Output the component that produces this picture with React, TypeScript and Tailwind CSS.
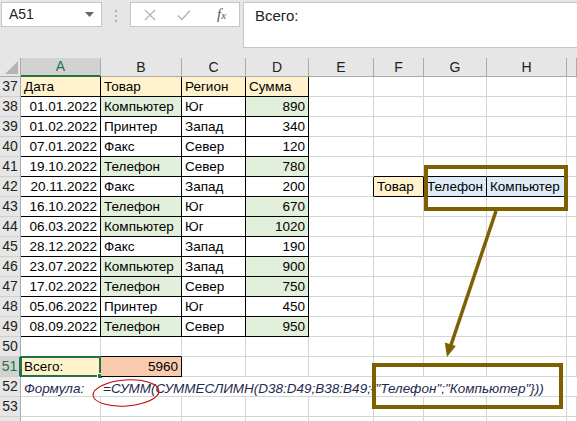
import { ReactNode } from 'react';

type Cell = { text?: string; right?: boolean; bg?: string };

const GREEN = 'bg-[#e2efda]';
const CREAM = 'bg-[#fff2cc]';

const data: [string, string, string, string, boolean][] = [
  ['01.01.2022', 'Компьютер', 'Юг', '890', true],
  ['01.02.2022', 'Принтер', 'Запад', '340', false],
  ['07.01.2022', 'Факс', 'Север', '120', false],
  ['19.10.2022', 'Телефон', 'Север', '780', true],
  ['20.11.2022', 'Факс', 'Запад', '200', false],
  ['16.10.2022', 'Телефон', 'Юг', '670', true],
  ['06.03.2022', 'Компьютер', 'Юг', '1020', true],
  ['28.12.2022', 'Факс', 'Запад', '190', false],
  ['23.07.2022', 'Компьютер', 'Запад', '900', true],
  ['17.02.2022', 'Телефон', 'Север', '750', true],
  ['05.06.2022', 'Принтер', 'Юг', '450', false],
  ['08.09.2022', 'Телефон', 'Север', '950', true],
];

function buildRows(): Record<number, Cell[]> {
  const rows: Record<number, Cell[]> = {};
  for (let r = 37; r <= 54; r++) rows[r] = Array.from({ length: 9 }, () => ({}));
  rows[37][0] = { text: 'Дата', bg: CREAM };
  rows[37][1] = { text: 'Товар', bg: CREAM };
  rows[37][2] = { text: 'Регион', bg: CREAM };
  rows[37][3] = { text: 'Сумма', bg: CREAM };
  data.forEach(([d, item, region, sum, hit], i) => {
    const r = 38 + i;
    rows[r][0] = { text: d, right: true };
    rows[r][1] = { text: item, bg: hit ? GREEN : undefined };
    rows[r][2] = { text: region };
    rows[r][3] = { text: sum, right: true, bg: hit ? GREEN : undefined };
  });
  rows[42][5] = { text: 'Товар', bg: CREAM };
  rows[42][6] = { text: 'Телефон', bg: 'bg-[#ddebf7]' };
  rows[42][7] = { text: 'Компьютер', bg: 'bg-[#ddebf7]' };
  rows[51][0] = { text: 'Всего:', bg: CREAM };
  rows[51][1] = { text: '5960', right: true, bg: 'bg-[#f8cbad]' };
  return rows;
}

function boxed(r: number, c: number) {
  if (c >= 0 && c <= 3 && r >= 37 && r <= 49) return true;
  if (r === 51 && (c === 0 || c === 1)) return true;
  if (r === 42 && c >= 5 && c <= 7) return true;
  return false;
}

const rows = buildRows();
const cols = ['A', 'B', 'C', 'D', 'E', 'F', 'G', 'H', ''];

function RowHead({ n }: { n: number }) {
  const active = n === 51;
  return (
    <div
      className={`flex h-5 items-center justify-center border-b border-[#d0d0d0] text-[14px] ${
        active
          ? 'border-r-2 border-r-[#217346] bg-[#d2d2d2] text-[#217346]'
          : 'border-r border-r-[#ababab] bg-[#e6e6e6] text-[#222]'
      }`}
    >
      {n < 54 ? n : ''}
    </div>
  );
}

function SheetCell({ r, c, cell }: { r: number; c: number; cell: Cell }) {
  const rightBlack = boxed(r, c) || boxed(r, c + 1);
  const bottomBlack = boxed(r, c) || boxed(r + 1, c);
  const selected = r === 51 && c === 0;
  return (
    <div
      className={`relative flex h-5 items-center whitespace-nowrap border-r border-b px-[3px] pt-px leading-none ${
        cell.right ? 'justify-end' : ''
      } ${rightBlack ? 'border-r-black' : 'border-r-[#d4d4d4]'} ${
        bottomBlack ? 'border-b-black' : 'border-b-[#d4d4d4]'
      } ${cell.bg ?? 'bg-white'}`}
    >
      {cell.text}
      {selected && (
        <div className="absolute -top-px -left-px -right-px -bottom-px border-2 border-[#217346]">
          <div className="absolute -right-[4px] -bottom-[4px] h-[6px] w-[6px] border border-white bg-[#217346]" />
        </div>
      )}
    </div>
  );
}

function Annotations() {
  return (
    <svg className="pointer-events-none absolute left-0 top-0" width="577" height="421">
      <rect x="426" y="167" width="140" height="42" fill="none" stroke="#7f6000" strokeWidth="4" />
      <rect x="374" y="365" width="187" height="42" fill="none" stroke="#7f6000" strokeWidth="4" />
      <line x1="496" y1="211" x2="451" y2="345" stroke="#7f6000" strokeWidth="3.5" />
      <polygon points="447,357 455.8,346 444.8,342.5" fill="#7f6000" />
      <ellipse cx="126" cy="393" rx="33" ry="13" fill="none" stroke="#c00000" strokeWidth="1" transform="rotate(-4 126 393)" />
    </svg>
  );
}

function Toolbar({ children }: { children: ReactNode }) {
  return <div className="flex h-[58px] bg-[#e6e6e6]">{children}</div>;
}

export default function App() {
  const rowNums = Array.from({ length: 18 }, (_, i) => 37 + i);
  return (
    <div className="relative h-[421px] w-[577px] overflow-hidden bg-white font-['Liberation_Sans',Arial,sans-serif] text-[13.5px] text-black">
      <Toolbar>
        <div className="ml-px mt-[2px] flex h-[25px] w-[101px] items-center justify-between border border-[#c6c6c6] bg-white pl-[7px] pr-[7px] text-[14px] text-[#222]">
          <span>A51</span>
          <svg width="9" height="5" viewBox="0 0 9 5">
            <path d="M0 0h9L4.5 5z" fill="#666" />
          </svg>
        </div>
        <div className="mx-[13px] mt-[10px] flex h-[12px] flex-col justify-between">
          <span className="h-[2px] w-[2px] bg-[#b0b0b0]" />
          <span className="h-[2px] w-[2px] bg-[#b0b0b0]" />
          <span className="h-[2px] w-[2px] bg-[#b0b0b0]" />
        </div>
        <div className="mt-[2px] flex h-[25px] w-[110px] items-center border border-[#c6c6c6] bg-white">
          <svg className="ml-[13px]" width="12" height="12" viewBox="0 0 12 12">
            <path d="M1 1l10 10M11 1L1 11" stroke="#b4b4b4" strokeWidth="1.3" />
          </svg>
          <svg className="ml-[21px]" width="14" height="12" viewBox="0 0 14 12">
            <path d="M1 6.5l4 4L13 1.5" stroke="#b4b4b4" strokeWidth="1.4" fill="none" />
          </svg>
          <span className="ml-[26px] font-['Liberation_Serif',serif] text-[15px] italic text-[#555]">
            f<span className="text-[11px]">x</span>
          </span>
        </div>
        <div className="ml-[3px] mt-[2px] h-[46px] flex-1 border border-r-0 border-[#c6c6c6] bg-white pl-[11px] pt-[2px] text-[15px] text-[#222]">
          Всего:
        </div>
      </Toolbar>

      <div className="grid grid-cols-[21px_80px_81px_64px_63px_65px_50px_63px_80px_1fr]">
        <div className="relative h-[19px] border-r border-b border-[#ababab] bg-[#e6e6e6]">
          <svg className="absolute right-[2px] bottom-[2px]" width="13" height="13" viewBox="0 0 13 13">
            <path d="M13 0v13H0z" fill="#b4b4b4" />
          </svg>
        </div>
        {cols.map((c, i) => (
          <div
            key={c + i}
            className={`flex h-[19px] items-center justify-center border-r border-r-[#ababab] text-[14px] ${
              i === 0
                ? 'border-b-2 border-b-[#217346] bg-[#d2d2d2] text-[#217346]'
                : 'border-b border-b-[#ababab] bg-[#e6e6e6] text-[#222]'
            }`}
          >
            {c}
          </div>
        ))}

        {rowNums.map((r) =>
          r === 52 ? (
            <div key={r} className="contents">
              <RowHead n={r} />
              <div className="col-span-8 flex h-5 items-end whitespace-nowrap border-b border-b-[#d4d4d4] border-r border-r-[#d4d4d4] pb-px leading-none italic text-[#1f2a50]">
                <span className="w-[80px] pl-[3px]">Формула:</span>
                <span className="pl-[2px]">=СУММ(СУММЕСЛИМН(D38:D49;B38:B49;{'{'}"Телефон";"Компьютер"{'}'}))</span>
              </div>
              <div className="h-5 border-b border-b-[#d4d4d4]" />
            </div>
          ) : (
            <div key={r} className="contents">
              <RowHead n={r} />
              {rows[r].map((cell, c) => (
                <SheetCell key={c} r={r} c={c} cell={cell} />
              ))}
            </div>
          ),
        )}
      </div>

      <Annotations />
    </div>
  );
}
